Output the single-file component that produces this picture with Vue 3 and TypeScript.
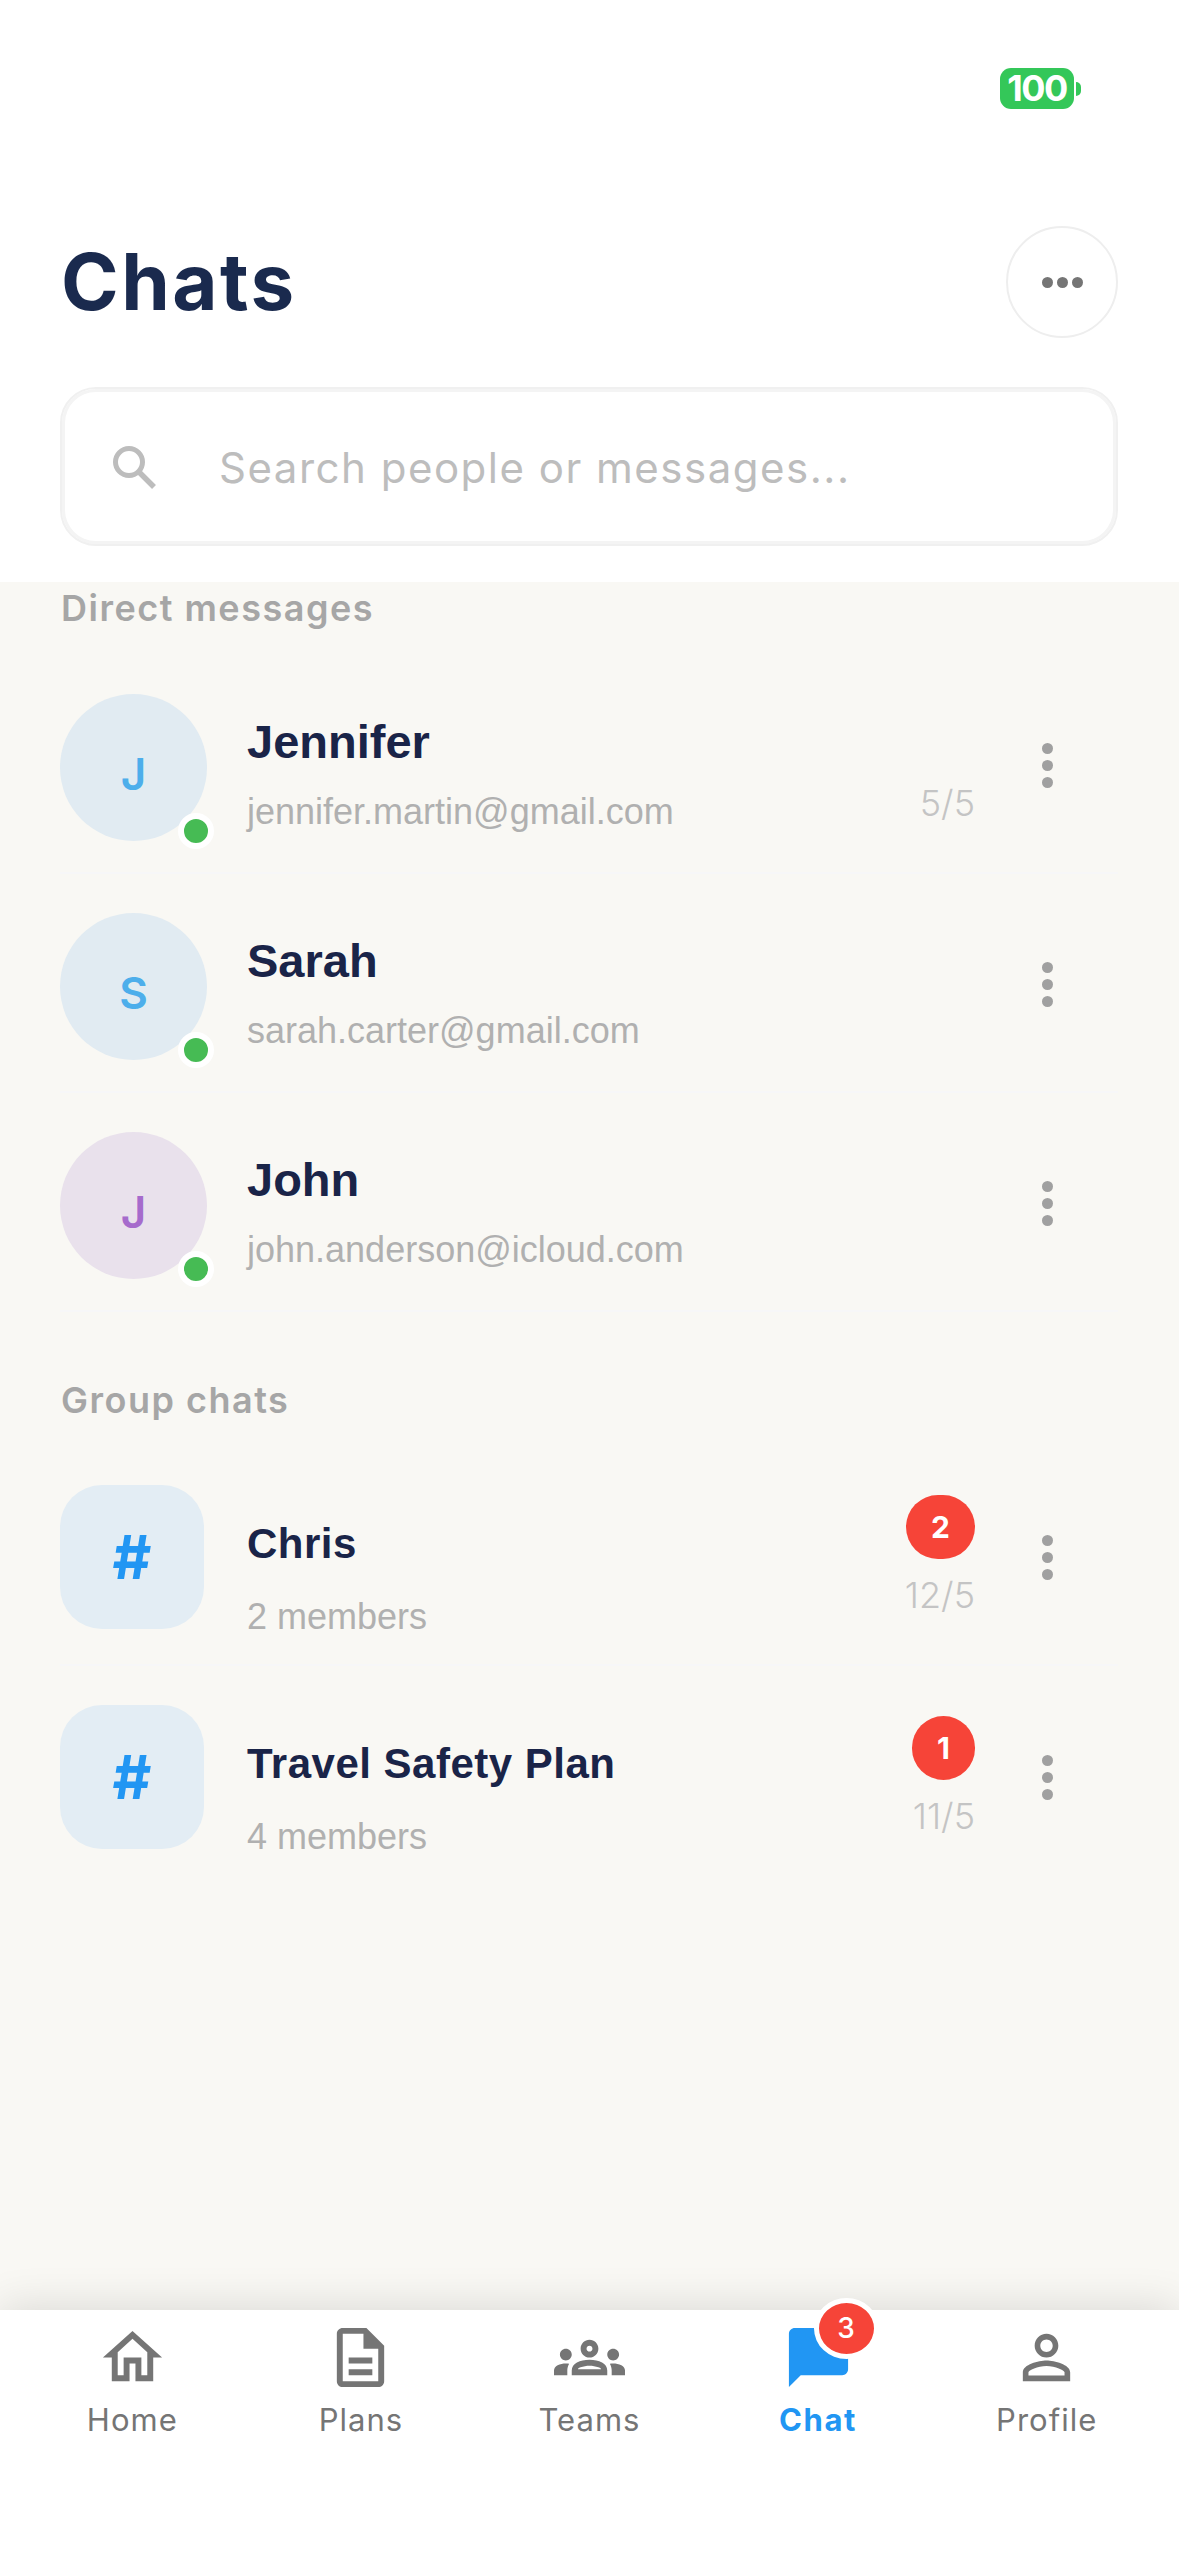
<script setup lang="ts">
interface DirectChat {
  initial: string
  name: string
  email: string
  date?: string
  tone: 'blue' | 'purple'
}

interface GroupChat {
  name: string
  members: string
  date: string
  unread: number
}

const directChats: DirectChat[] = [
  { initial: 'J', name: 'Jennifer', email: 'jennifer.martin@gmail.com', date: '5/5', tone: 'blue' },
  { initial: 'S', name: 'Sarah', email: 'sarah.carter@gmail.com', tone: 'blue' },
  { initial: 'J', name: 'John', email: 'john.anderson@icloud.com', tone: 'purple' }
]

const groupChats: GroupChat[] = [
  { name: 'Chris', members: '2 members', date: '12/5', unread: 2 },
  { name: 'Travel Safety Plan', members: '4 members', date: '11/5', unread: 1 }
]

const tabs = [
  {
    label: 'Home',
    path: 'M12 5.69l5 4.5V18h-2v-6H9v6H7v-7.81l5-4.5M12 3L2 12h3v8h6v-6h2v6h6v-8h3L12 3z'
  },
  {
    label: 'Plans',
    path: 'M8 16h8v2H8zm0-4h8v2H8zm6-10H6c-1.1 0-2 .9-2 2v16c0 1.1.89 2 1.99 2H18c1.1 0 2-.9 2-2V8l-6-6zm4 18H6V4h7v5h5v11z'
  },
  {
    label: 'Teams',
    path: 'M4 13c1.1 0 2-.9 2-2s-.9-2-2-2-2 .9-2 2 .9 2 2 2zm1.13 1.1c-.37-.06-.74-.1-1.13-.1-.99 0-1.93.21-2.78.58C.48 14.9 0 15.62 0 16.43V18h4.5v-1.61c0-.83.23-1.61.63-2.29zM20 13c1.1 0 2-.9 2-2s-.9-2-2-2-2 .9-2 2 .9 2 2 2zm4 3.43c0-.81-.48-1.53-1.22-1.85-.85-.37-1.79-.58-2.78-.58-.39 0-.76.04-1.13.1.4.68.63 1.46.63 2.29V18H24v-1.57zm-7.76-2.78c-1.17-.52-2.61-.9-4.24-.9-1.63 0-3.07.39-4.24.9C6.68 14.13 6 15.21 6 16.39V18h12v-1.61c0-1.18-.68-2.26-1.76-2.74zM8.07 16c.09-.23.13-.39.91-.69.97-.38 1.99-.56 3.02-.56s2.05.18 3.02.56c.77.3.81.46.91.69H8.07zM12 8c.55 0 1 .45 1 1s-.45 1-1 1-1-.45-1-1 .45-1 1-1m0-2c-1.66 0-3 1.34-3 3s1.34 3 3 3 3-1.34 3-3-1.34-3-3-3z'
  },
  {
    label: 'Chat',
    path: 'M20 2H4c-1.1 0-2 .9-2 2v18l4-4h14c1.1 0 2-.9 2-2V4c0-1.1-.9-2-2-2z',
    active: true,
    badge: 3
  },
  {
    label: 'Profile',
    path: 'M12 5.9c1.16 0 2.1.94 2.1 2.1s-.94 2.1-2.1 2.1S9.9 9.16 9.9 8s.94-2.1 2.1-2.1m0 9c2.97 0 6.1 1.46 6.1 2.1v1.1H5.9V17c0-.64 3.13-2.1 6.1-2.1M12 4C9.79 4 8 5.79 8 8s1.79 4 4 4 4-1.79 4-4-1.79-4-4-4zm0 9c-2.67 0-8 1.34-8 4v3h16v-3c0-2.66-5.33-4-8-4z'
  }
]
</script>

<template>
  <div class="page">
    <header class="top">
      <div class="status">
        <span class="battery">100</span>
        <span class="battery-tip"></span>
      </div>
      <div class="title-row">
        <h1>Chats</h1>
        <button class="more">
          <i></i><i></i><i></i>
        </button>
      </div>
      <div class="search">
        <svg class="search-icon" viewBox="0 0 44 44" width="44" height="44">
          <circle cx="17" cy="17" r="13.5" fill="none" stroke="#bdbdbd" stroke-width="5" />
          <path d="M27 27l15 15" stroke="#bdbdbd" stroke-width="5.5" fill="none" />
        </svg>
        <span class="placeholder">Search people or messages...</span>
      </div>
    </header>

    <main class="content">
      <h2 class="section direct">Direct messages</h2>
      <div v-for="chat in directChats" :key="chat.email" class="row">
        <div class="avatar" :class="chat.tone">
          {{ chat.initial }}
          <span class="online"></span>
        </div>
        <div class="info">
          <div class="name">{{ chat.name }}</div>
          <div class="email">{{ chat.email }}</div>
        </div>
        <div class="meta">
          <span v-if="chat.date" class="date">{{ chat.date }}</span>
        </div>
        <div class="kebab"><i></i><i></i><i></i></div>
      </div>

      <h2 class="section group">Group chats</h2>
      <div v-for="chat in groupChats" :key="chat.name" class="row">
        <div class="tile">#</div>
        <div class="info group-info">
          <div class="name small">{{ chat.name }}</div>
          <div class="members">{{ chat.members }}</div>
        </div>
        <div class="meta">
          <span class="unread">{{ chat.unread }}</span>
          <span class="date">{{ chat.date }}</span>
        </div>
        <div class="kebab"><i></i><i></i><i></i></div>
      </div>
    </main>

    <nav class="tabbar">
      <div v-for="tab in tabs" :key="tab.label" class="tab" :class="{ active: tab.active }">
        <span class="tab-icon">
          <svg viewBox="0 0 24 24" width="71" height="71">
            <path :d="tab.path" fill="currentColor" />
          </svg>
          <span v-if="tab.badge" class="tab-badge">{{ tab.badge }}</span>
        </span>
        <span class="tab-label">{{ tab.label }}</span>
      </div>
    </nav>
  </div>
</template>

<style>
html,
body {
  margin: 0;
  background: #fff;
}
</style>

<style scoped>
.page {
  width: 1179px;
  height: 2556px;
  display: flex;
  flex-direction: column;
  background: #f9f8f4;
  font-family: Inter, 'Liberation Sans', sans-serif;
  overflow: hidden;
}

.top {
  height: 582px;
  box-sizing: border-box;
  padding: 0 61px;
  background: #fff;
}

.status {
  height: 226px;
  display: flex;
  align-items: flex-start;
  justify-content: flex-end;
  padding: 68px 37px 0 0;
  box-sizing: border-box;
}

.battery {
  width: 74px;
  height: 41px;
  border-radius: 11px;
  background: #34c759;
  color: #fff;
  font-size: 36px;
  font-weight: 700;
  line-height: 41px;
  letter-spacing: -1.5px;
  text-align: center;
}

.battery-tip {
  width: 5px;
  height: 14px;
  margin: 14px 0 0 2px;
  border-radius: 0 7px 7px 0;
  background: #34c759;
}

.title-row {
  display: flex;
  align-items: center;
  justify-content: space-between;
  height: 112px;
}

h1 {
  margin: -2px 0 0;
  color: #1a2a4e;
  font-size: 78px;
  font-weight: 700;
  letter-spacing: 2.5px;
}

.more {
  width: 112px;
  height: 112px;
  padding: 0;
  border: 2px solid #eeeeee;
  border-radius: 50%;
  background: #fff;
  display: flex;
  align-items: center;
  justify-content: center;
  gap: 4px;
}

.more i {
  width: 11px;
  height: 11px;
  border-radius: 50%;
  background: #757575;
}

.search {
  height: 159px;
  margin-top: 49px;
  margin-left: -1px;
  box-sizing: border-box;
  display: flex;
  align-items: center;
  padding-left: 50px;
  border: 2px solid #f0f0f0;
  border-radius: 36px;
  box-shadow: inset 0 0 0 3px #f4f4f4;
}

.search-icon {
  flex: none;
}

.placeholder {
  margin: 2px 0 0 63px;
  color: #bdbdbd;
  font-size: 42px;
  letter-spacing: 1.5px;
}

.content {
  flex: 1;
  padding: 0 61px 0 60px;
}

.section {
  margin: 0;
  padding-left: 1px;
  color: #a6a6a6;
  font-size: 36px;
  font-weight: 600;
  letter-spacing: 1.5px;
  line-height: 50px;
}

.direct {
  margin-top: 1px;
  margin-bottom: 22px;
}

.group {
  margin-top: 63px;
  margin-bottom: 22px;
}

.row {
  height: 219px;
  box-sizing: border-box;
  display: flex;
  align-items: center;
  border-bottom: 2px solid #f7f7f8;
  padding-top: 3px;
}

.row:last-child {
  border-bottom: 0;
}

.avatar {
  position: relative;
  flex: none;
  width: 147px;
  height: 147px;
  margin-top: 4px;
  padding-top: 14px;
  box-sizing: border-box;
  border-radius: 50%;
  display: flex;
  align-items: center;
  justify-content: center;
  font-size: 44px;
  font-weight: 600;
}

.avatar.blue {
  background: #e1ebf2;
  color: #4daeeb;
}

.avatar.purple {
  background: #e9e1ec;
  color: #a66bcc;
}

.online {
  position: absolute;
  right: -7px;
  bottom: -8px;
  width: 24px;
  height: 24px;
  border: 6px solid #fff;
  border-radius: 50%;
  background: #46bb54;
}

.tile {
  flex: none;
  width: 144px;
  height: 144px;
  margin-right: 3px;
  border-radius: 42px;
  background: #e3edf4;
  color: #2196f3;
  display: flex;
  align-items: center;
  justify-content: center;
  font-size: 60px;
  font-weight: 700;
}

.info {
  flex: 1;
  min-width: 0;
  margin: 18px 0 0 40px;
}

.group-info {
  margin-top: 40px;
}

.name {
  color: #1a2448;
  font-family: 'Liberation Sans', sans-serif;
  font-size: 47px;
  font-weight: 700;
  line-height: 54px;
}

.name.small {
  font-size: 42px;
  letter-spacing: 0.5px;
}

.email,
.members {
  margin-top: 22px;
  color: #b0b0b0;
  font-family: 'Liberation Sans', sans-serif;
  font-size: 36px;
  line-height: 42px;
}

.members {
  margin-top: 25px;
}

.meta {
  align-self: stretch;
  display: flex;
  flex-direction: column;
  align-items: flex-end;
  justify-content: flex-end;
  gap: 14px;
  padding-bottom: 47px;
}

.date {
  color: #c4c4c4;
  font-size: 36px;
  font-weight: 300;
  line-height: 44px;
}

.unread {
  height: 64px;
  padding: 0 25px;
  box-sizing: border-box;
  border-radius: 32px;
  background: #f64438;
  color: #fff;
  font-size: 30px;
  font-weight: 700;
  line-height: 64px;
  text-align: center;
}

.kebab {
  flex: none;
  width: 11px;
  margin: 0 65px 0 67px;
  display: flex;
  flex-direction: column;
  gap: 6px;
}

.kebab i {
  width: 11px;
  height: 11px;
  border-radius: 50%;
  background: #a0a0a0;
}

.tabbar {
  height: 246px;
  box-sizing: border-box;
  padding: 12px 18px 0;
  display: flex;
  background: #fff;
  box-shadow: 0 -4px 40px rgba(0, 0, 0, 0.12);
  position: relative;
}

.tab {
  flex: 1;
  display: flex;
  flex-direction: column;
  align-items: center;
  color: #757575;
}

.tab.active {
  color: #2196f3;
}

.tab-icon {
  position: relative;
  display: block;
  height: 71px;
}

.tab-icon svg {
  display: block;
}

.tab-badge {
  position: absolute;
  top: -24px;
  left: 31px;
  width: 55px;
  height: 51px;
  border: 5px solid #fff;
  border-radius: 50%;
  background: #f64438;
  color: #fff;
  font-size: 28px;
  font-weight: 500;
  line-height: 51px;
  text-align: center;
}

.tab-label {
  margin-top: 9px;
  font-size: 31px;
  letter-spacing: 1px;
  line-height: 36px;
}

.tab.active .tab-label {
  font-weight: 700;
  letter-spacing: 1.6px;
}
</style>
